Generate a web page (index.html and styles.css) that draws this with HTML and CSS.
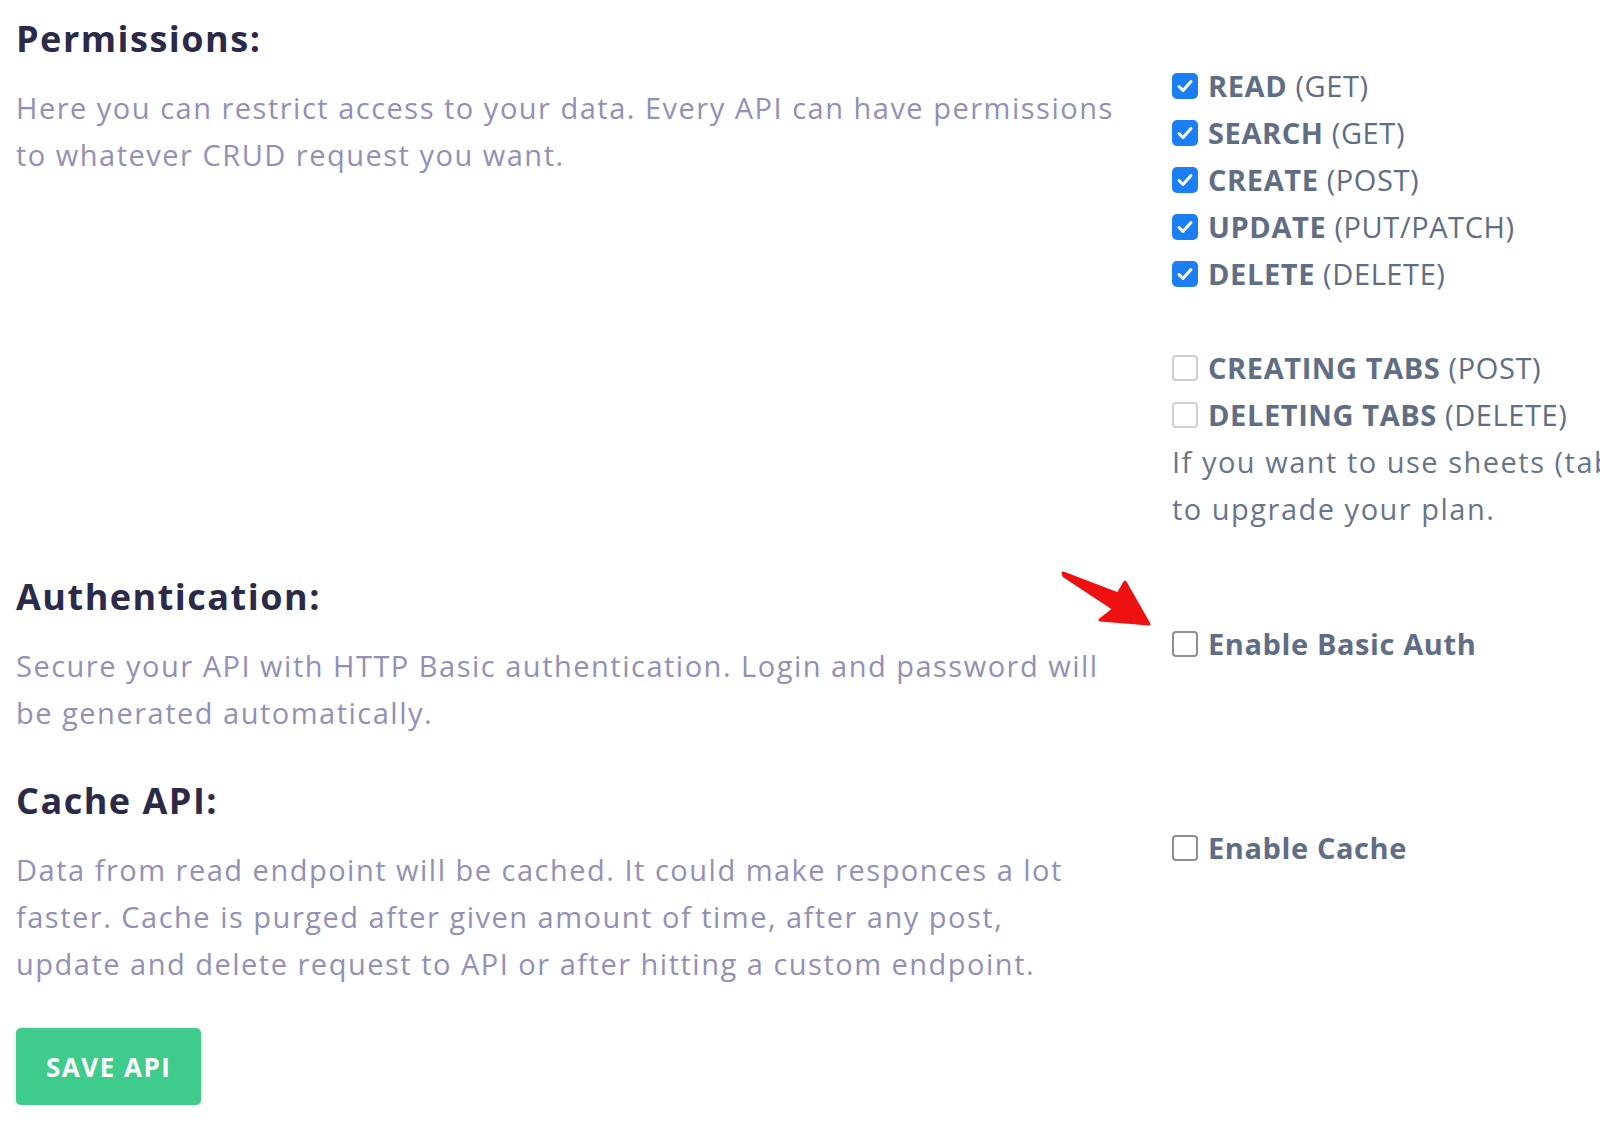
FILE: index.html
```html
<!DOCTYPE html>
<html lang="en">
<head>
<meta charset="utf-8">
<title>API settings</title>
<link rel="stylesheet" href="styles.css">
</head>
<body>
<main class="page">
  <section class="setting">
    <div class="info">
      <h2 class="title">Permissions:</h2>
      <p class="desc">Here you can restrict access to your data. Every API can have permissions to whatever CRUD request you want.</p>
    </div>
    <div class="options">
      <ul class="checks">
        <li class="check"><span class="box box-on"><svg viewBox="0 0 26 26"><path d="M7 13.5l4 4 8-9"/></svg></span><span class="label"><b>READ</b> (GET)</span></li>
        <li class="check"><span class="box box-on"><svg viewBox="0 0 26 26"><path d="M7 13.5l4 4 8-9"/></svg></span><span class="label"><b>SEARCH</b> (GET)</span></li>
        <li class="check"><span class="box box-on"><svg viewBox="0 0 26 26"><path d="M7 13.5l4 4 8-9"/></svg></span><span class="label"><b>CREATE</b> (POST)</span></li>
        <li class="check"><span class="box box-on"><svg viewBox="0 0 26 26"><path d="M7 13.5l4 4 8-9"/></svg></span><span class="label"><b>UPDATE</b> (PUT/PATCH)</span></li>
        <li class="check"><span class="box box-on"><svg viewBox="0 0 26 26"><path d="M7 13.5l4 4 8-9"/></svg></span><span class="label"><b>DELETE</b> (DELETE)</span></li>
      </ul>
      <ul class="checks checks-extra">
        <li class="check"><span class="box box-disabled"></span><span class="label"><b>CREATING TABS</b> (POST)</span></li>
        <li class="check"><span class="box box-disabled"></span><span class="label"><b>DELETING TABS</b> (DELETE)</span></li>
      </ul>
      <p class="note">If you want to use sheets (tabs) you need<br>to upgrade your plan.</p>
    </div>
  </section>

  <section class="setting setting-auth">
    <div class="info">
      <h2 class="title">Authentication:</h2>
      <p class="desc">Secure your API with HTTP Basic authentication. Login and password will be generated automatically.</p>
    </div>
    <div class="options">
      <ul class="checks">
        <li class="check"><span class="box box-off"></span><span class="label"><b>Enable Basic Auth</b></span></li>
      </ul>
    </div>
    <svg class="arrow" viewBox="0 0 100 65" aria-hidden="true"><path d="M6 6 L61 27 L68 15 L92 57 L43 53 L57 42 L7 9 Z"/></svg>
  </section>

  <section class="setting">
    <div class="info">
      <h2 class="title">Cache API:</h2>
      <p class="desc desc-narrow">Data from read endpoint will be cached. It could make responces a lot faster. Cache is purged after given amount of time, after any post, update and delete request to API or after hitting a custom endpoint.</p>
    </div>
    <div class="options">
      <ul class="checks">
        <li class="check"><span class="box box-off"></span><span class="label"><b>Enable Cache</b></span></li>
      </ul>
    </div>
  </section>

  <button class="save" type="button">SAVE API</button>
</main>
</body>
</html>
```
FILE: styles.css
```css
html, body {
  margin: 0;
  padding: 0;
  background: #ffffff;
  overflow: hidden;
}

body {
  font-family: "Open Sans", "Noto Sans", sans-serif;
  letter-spacing: 1.5px;
}

.page {
  width: 1568px;
  padding: 15px 16px 0;
  box-sizing: content-box;
}

.setting {
  position: relative;
  display: grid;
  grid-template-columns: 1114px minmax(0, 1fr);
  column-gap: 42px;
  margin-bottom: 41px;
}

.title {
  margin: 0;
  font-size: 36px;
  line-height: 48px;
  font-weight: 700;
  color: #2b2a48;
}

.desc {
  margin: 21px 0 0;
  font-size: 29px;
  line-height: 47px;
  color: #9290b6;
}

.desc-narrow {
  max-width: 1060px;
}

.options {
  padding-top: 47px;
  min-width: 0;
}

.checks {
  list-style: none;
  margin: 0;
  padding: 0;
}

.checks-extra {
  margin-top: 47px;
}

.check {
  display: flex;
  align-items: center;
  height: 47px;
  white-space: nowrap;
}

.box {
  flex: none;
  width: 26px;
  height: 26px;
  box-sizing: border-box;
  border-radius: 5px;
  margin-right: 10px;
  display: flex;
  align-items: center;
  justify-content: center;
}

.box svg {
  width: 26px;
  height: 26px;
}

.box svg path {
  fill: none;
  stroke: #ffffff;
  stroke-width: 3;
  stroke-linecap: round;
  stroke-linejoin: round;
}

.box-on {
  background: #1b7ff3;
}

.box-disabled {
  border: 2px solid #cfcfd3;
  border-radius: 4px;
  background: #ffffff;
}

.box-off {
  border: 2px solid #8b8f98;
  border-radius: 4px;
  background: #ffffff;
}

.label {
  font-size: 29px;
  line-height: 47px;
  letter-spacing: 0.6px;
  color: #5f6d85;
}

.label b {
  font-weight: 700;
}

.note {
  margin: 0;
  font-size: 29px;
  line-height: 47px;
  color: #67758c;
  white-space: nowrap;
}

.arrow {
  position: absolute;
  left: 1041px;
  top: -6px;
  width: 100px;
  height: 65px;
}

.arrow path {
  fill: #ee1111;
  stroke: #ee1111;
  stroke-width: 3;
  stroke-linejoin: round;
}

.save {
  display: inline-flex;
  align-items: center;
  justify-content: center;
  height: 77px;
  padding: 0 30px;
  border: none;
  border-radius: 5px;
  background: #3fcb8b;
  color: #ffffff;
  font-family: "Open Sans", "Noto Sans", sans-serif;
  font-size: 26px;
  font-weight: 700;
  letter-spacing: 1.5px;
  box-shadow: 0 2px 5px rgba(0, 0, 0, 0.18);
  cursor: pointer;
}
```
